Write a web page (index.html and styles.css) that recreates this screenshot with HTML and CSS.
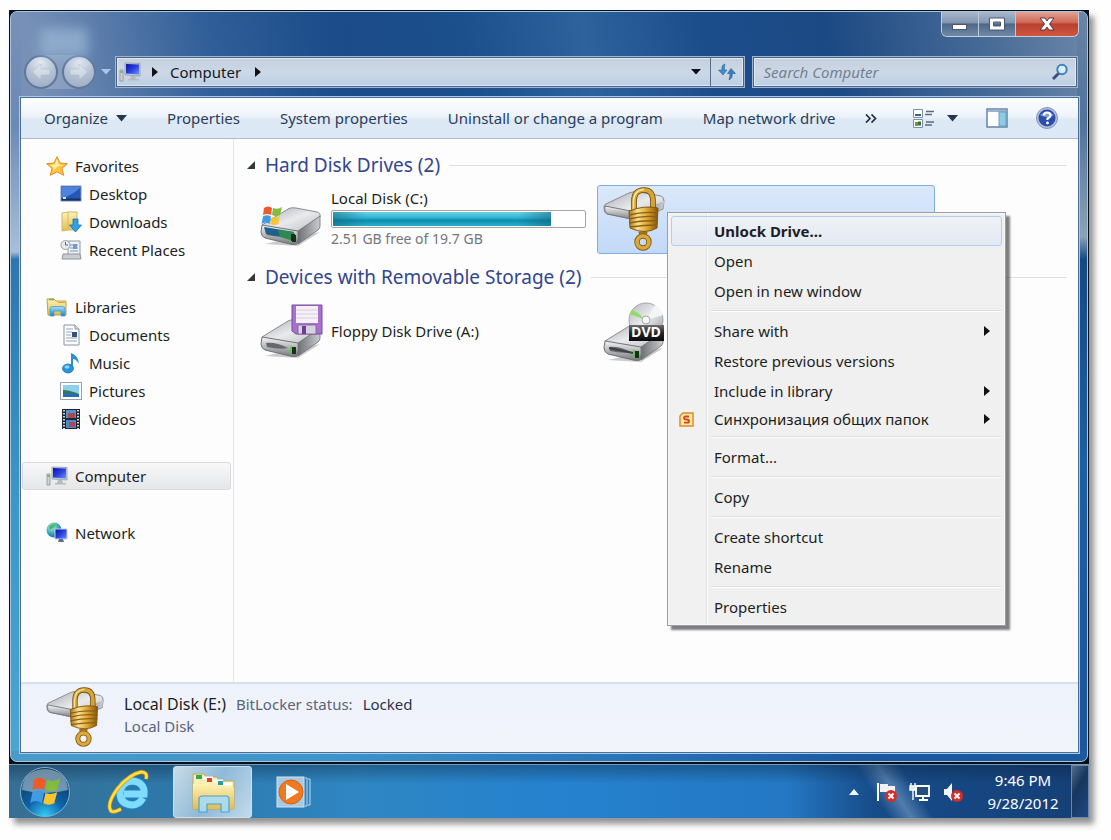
FILE: index.html
```
<!DOCTYPE html>
<html lang="en">
<head>
<meta charset="utf-8">
<title>Computer</title>
<link rel="stylesheet" href="styles.css">
</head>
<body>
<svg class="defs" width="0" height="0" aria-hidden="true">
  <defs>
    <linearGradient id="metalTop" x1="0" y1="0" x2="1" y2="1"><stop offset="0" stop-color="#a9abb0"/><stop offset=".5" stop-color="#e9eaec"/><stop offset="1" stop-color="#b9bbbe"/></linearGradient>
    <linearGradient id="metalFront" x1="0" y1="0" x2="0" y2="1"><stop offset="0" stop-color="#f6f6f7"/><stop offset="1" stop-color="#77797d"/></linearGradient>
    <linearGradient id="metalSide" x1="0" y1="0" x2="1" y2="0"><stop offset="0" stop-color="#6f7175"/><stop offset="1" stop-color="#c9cbce"/></linearGradient>
    <linearGradient id="gold" x1="0" y1="0" x2="1" y2="0"><stop offset="0" stop-color="#a8741a"/><stop offset=".3" stop-color="#fbe28b"/><stop offset=".65" stop-color="#d9a02c"/><stop offset="1" stop-color="#80540d"/></linearGradient>
    <linearGradient id="screen" x1="0" y1="0" x2="1" y2="1"><stop offset="0" stop-color="#0a12a0"/><stop offset=".5" stop-color="#2b3ee0"/><stop offset="1" stop-color="#6f95f2"/></linearGradient>
    <linearGradient id="folder" x1="0" y1="0" x2="0" y2="1"><stop offset="0" stop-color="#fdf3b4"/><stop offset="1" stop-color="#e3bb52"/></linearGradient>
    <linearGradient id="sky" x1="0" y1="0" x2="0" y2="1"><stop offset="0" stop-color="#9fe3fb"/><stop offset="1" stop-color="#1d80c8"/></linearGradient>
    <linearGradient id="disc" x1="0" y1="0" x2="1" y2="1"><stop offset="0" stop-color="#b4b7ba"/><stop offset=".5" stop-color="#eceded"/><stop offset="1" stop-color="#8e9194"/></linearGradient>
    <linearGradient id="label" x1="0" y1="0" x2="0" y2="1"><stop offset="0" stop-color="#6c6e72"/><stop offset=".5" stop-color="#232427"/><stop offset="1" stop-color="#0b0b0d"/></linearGradient>
    <radialGradient id="globe" cx=".35" cy=".3" r=".8"><stop offset="0" stop-color="#b7f0ea"/><stop offset=".6" stop-color="#2b9fb5"/><stop offset="1" stop-color="#126a8e"/></radialGradient>
    <symbol id="i-drive" viewBox="0 0 62 42">
      <path d="M5 39 L38 41 L60 27 L44 30 Z" fill="#0003"/>
      <path d="M2 20 L28 4 Q31 2 36 3 L57 7 Q61 8 60 12 L38 27 L3 22 Z" fill="url(#metalTop)" stroke="#8b8d91"/>
      <path d="M38 26 L60 11 L60 21 Q60 23 58 25 L38 39 Z" fill="url(#metalSide)" stroke="#6d6f72" stroke-width=".8"/>
      <path d="M2 20 L38 26 Q39 33 37 39 Q34 40 30 39 L5 33 Q1 31 1 27 Z" fill="url(#metalFront)" stroke="#707276"/>
      <path d="M6 26 Q16 25 28 31 Q20 33 7 30 Z" fill="#66686c"/>
      <path d="M32 30 h4 v7 h-4 Z" fill="#183018"/><path d="M31 29 v8" stroke="#5ac84a" stroke-width="1.5"/>
    </symbol>
    <symbol id="i-lockdrive" viewBox="0 0 62 66">
      <path d="M1 20 Q1 17 5 16 L26 6 Q30 4 36 5 L58 9 Q61 10 61 14 L60 22 L33 33 L4 27 Q1 26 1 20 Z" fill="url(#metalTop)" stroke="#8a8b90"/>
      <path d="M2 19 L33 25 L33 33 L5 27 Q1 26 2 19 Z" fill="url(#metalFront)" stroke="#777980"/>
      <path d="M33 25 L61 14 L60 21 L33 33 Z" fill="url(#metalSide)"/>
      <path d="M31 27 V14 Q31 3 41 3 Q50 3 50 14 V26" fill="none" stroke="#6e480a" stroke-width="5.600"/>
      <path d="M31 27 V14 Q31 3 41 3 Q50 3 50 14 V26" fill="none" stroke="#d3a437" stroke-width="4"/>
      <path d="M30.500 26 V14 Q31 3 41 2.500" fill="none" stroke="#f9e59b" stroke-width="1.500"/>
      <path d="M26 24 Q41 18 55 21 L54 41 Q42 48 27 41 Z" fill="url(#gold)" stroke="#83560f"/>
      <path d="M26 28 Q41 24 55 26 M26 32 Q41 28 55 30 M26 36 Q41 33 55 34 M27 40 Q41 38 54 38" fill="none" stroke="#8c5f14" stroke-width="1.400"/>
      <path d="M36 45 H44 L43 50 H37 Z" fill="#b78322" stroke="#83560f" stroke-width=".8"/>
      <circle cx="40" cy="55" r="6" fill="none" stroke="#855910" stroke-width="5.400"/>
      <circle cx="40" cy="55" r="6" fill="none" stroke="#dba83a" stroke-width="3.600"/>
    </symbol>
    <symbol id="i-pc" viewBox="0 0 22 20">
      <path d="M1 8 h3 v11 h-3 Z" fill="#d3d6d9" stroke="#8c9096" stroke-width=".8"/><path d="M1.500 10 h2" stroke="#2fc52f" stroke-width="1.600"/>
      <path d="M6 1 L21 1.500 V14 L6 13 Z" fill="#c7cfdc" stroke="#8f99ab" stroke-width=".8"/>
      <path d="M7 2 L20 2.500 V12.500 L7 11.500 Z" fill="url(#screen)"/>
      <path d="M12 14 h4 l1 3 h3 v1.500 h-11 v-1.500 h2 Z" fill="#b4b9c2"/>
    </symbol>
    <symbol id="i-win" viewBox="0 0 24 24">
      <path d="M4 4 Q8 1 12 4 L11 11 Q7 9 3 11 Z" fill="#ee5a28"/>
      <path d="M13 4 Q18 6 22 3 L20 11 Q16 13 12 11 Z" fill="#83bc3b"/>
      <path d="M3 12.500 Q7 10 11 12.500 L9.500 20 Q5 17 1.500 20 Z" fill="#3f9ce0"/>
      <path d="M12 13 Q16 14.500 20 12.500 L18 20 Q14 22 10.500 20 Z" fill="#fcc52c"/>
    </symbol>
    <symbol id="i-library" viewBox="0 0 22 20">
      <path d="M1 2 h7 l2 2 h10 v14 H2 Z" fill="url(#folder)" stroke="#b99a3c" stroke-width=".9"/>
      <path d="M3 2.500 h5" stroke="#6fb350" stroke-width="1.600"/><path d="M12 5.500 h7" stroke="#d9a445"/>
      <path d="M4 19 V12 Q4 9.500 7 9.500 h9 Q19 9.500 19 12 V19 h-4 V14 H8 V19 Z" fill="url(#sky)" stroke="#4a9cc7" stroke-width=".8"/>
    </symbol>
    <symbol id="i-badge" viewBox="0 0 12 12"><circle cx="6" cy="6" r="6" fill="#d92b26"/><path d="M3.500 3.500 L8.500 8.500 M8.500 3.500 L3.500 8.500" stroke="#fff" stroke-width="2"/></symbol>
  </defs>
</svg>

<div class="desktop">
  <main class="window">
    <header class="titlebar">
      <div class="caption">
        <div class="ghost"></div>
        <div class="winbtns">
          <button class="wb" aria-label="Minimize"><svg width="18" height="14" viewBox="0 0 18 14"><rect x="1.500" y="7.500" width="14" height="5" fill="#fff" stroke="#4c5868"/></svg></button>
          <button class="wb" aria-label="Maximize"><svg width="18" height="14" viewBox="0 0 18 14"><path d="M1.500 1 h15 v12 h-15 Z M5.500 5 v4 h7 v-4 Z" fill="#fff" fill-rule="evenodd" stroke="#4c5868"/></svg></button>
          <button class="wb close" aria-label="Close"><svg width="18" height="14" viewBox="0 0 18 14"><path d="M2 1 h5 l2 3 2-3 h5 l-4.500 6 4.500 6 h-5 l-2-3 -2 3 h-5 l4.500-6 Z" fill="#fff" stroke="#5a3540"/></svg></button>
        </div>
      </div>
      <div class="navrow">
        <div class="travel">
          <button class="orb" aria-label="Back"><svg width="22" height="22" viewBox="0 0 22 22"><path d="M2 11 L11 3 V8 H20 V14 H11 V19 Z" fill="#dfe5ee" stroke="#a9b5c6" stroke-width=".7"/></svg></button>
          <button class="orb" aria-label="Forward"><svg width="22" height="22" viewBox="0 0 22 22"><path d="M20 11 L11 3 V8 H2 V14 H11 V19 Z" fill="#dfe5ee" stroke="#a9b5c6" stroke-width=".7"/></svg></button>
        </div>
        <button class="recent" aria-label="Recent pages"><svg width="10" height="6" viewBox="0 0 10 6"><path d="M0 0 H10 L5 5.500 Z" fill="#aac6e6"/></svg></button>
        <div class="address">
          <svg width="22" height="20"><use href="#i-pc"/></svg>
          <svg class="crumb" width="6" height="12" viewBox="0 0 6 12"><path d="M0 1 L6 6 L0 11 Z" fill="#101418"/></svg>
          <a class="place" href="#">Computer</a>
          <svg class="crumb" width="6" height="12" viewBox="0 0 6 12"><path d="M0 1 L6 6 L0 11 Z" fill="#101418"/></svg>
          <button class="drop" aria-label="Previous locations"><svg width="10" height="6" viewBox="0 0 10 6"><path d="M0 0 H10 L5 5.500 Z" fill="#0b0f1e"/></svg></button>
          <button class="refresh" aria-label="Refresh"><svg width="20" height="18" viewBox="0 0 20 18"><path d="M8 1 Q4 2 5 7 H1.500 L6 12 L10 7 H7.500 Q7 4 8 1 Z" fill="#3f8dcb" stroke="#2868a0" stroke-width=".6"/><path d="M12 17 Q16 15 15 10.500 H18.500 L14 5.500 L10.500 10.500 H13 Q13 14 12 17 Z" fill="#3f7fb9" stroke="#245d94" stroke-width=".6"/></svg></button>
        </div>
        <label class="search">
          <input type="text" placeholder="Search Computer" aria-label="Search Computer">
          <svg width="18" height="18" viewBox="0 0 18 18"><path d="M8 10 L2 16" stroke="#3c4f86" stroke-width="3"/><circle cx="11" cy="6.500" r="4.700" fill="#d9f0fb" stroke="#3f83bd" stroke-width="2"/></svg>
        </label>
      </div>
    </header>

    <div class="client">
      <div class="toolbar">
        <button>Organize <svg width="11" height="7" viewBox="0 0 11 7"><path d="M0 0 H11 L5.500 6.500 Z" fill="#26364f"/></svg></button>
        <button>Properties</button>
        <button>System properties</button>
        <button>Uninstall or change a program</button>
        <button>Map network drive</button>
        <button class="more" aria-label="More commands"><svg width="12" height="9" viewBox="0 0 12 9"><path d="M1 .5 L5 4.500 L1 8.500 M6.500 .5 L10.500 4.500 L6.500 8.500" fill="none" stroke="#1f2c44" stroke-width="1.700"/></svg></button>
        <div class="views">
          <button aria-label="Change your view"><svg width="23" height="21" viewBox="0 0 23 21"><path d="M1.500 1.500 h9 v8 h-9 Z M1.500 11.500 h9 v8 h-9 Z" fill="#fff" stroke="#7e8ea6"/><path d="M3 6 h6 v2 h-6 Z" fill="#2f6b74"/><path d="M3 14 h3 v4 h-3 Z" fill="#58a53c"/><path d="M6 13.500 h3 v4 h-3 Z" fill="#3d6d39"/><path d="M14 3.500 h8 M13 6.500 h7 M14 14 h8 M13 17 h7" stroke="#5b6a80" stroke-width="1.400"/></svg></button>
          <button aria-label="More options"><svg width="11" height="7" viewBox="0 0 11 7"><path d="M0 0 H11 L5.500 6.500 Z" fill="#26364f"/></svg></button>
          <button aria-label="Show the preview pane"><svg width="22" height="20" viewBox="0 0 22 20"><rect x="1" y="1" width="20" height="18" fill="#fff" stroke="#5b7da3" stroke-width="1.400"/><path d="M2 3 h18" stroke="#9bb4cf" stroke-width="2"/><rect x="13" y="4" width="7" height="14" fill="#8ccbe8" stroke="#5d93b8" stroke-width=".8"/></svg></button>
          <button aria-label="Get help"><svg width="22" height="22" viewBox="0 0 22 22"><circle cx="11" cy="11" r="10.500" fill="#b3bfd8" stroke="#8796b5"/><circle cx="11" cy="11" r="8.500" fill="#2b4cad"/><path d="M4 8 Q11 2 18 8 Q11 12 4 8 Z" fill="#7fa0e2"/><path d="M8 8.500 Q8 5.500 11 5.500 Q14.500 5.500 14.500 8.500 Q14.500 10 11.500 11.500 V13" fill="none" stroke="#fff" stroke-width="2.200"/><circle cx="11.500" cy="16" r="1.400" fill="#fff"/></svg></button>
        </div>
      </div>

      <div class="body">
        <nav class="tree">
          <section>
            <a href="#"><svg width="22" height="20" viewBox="0 0 22 20"><path d="M11 .7 L14 7 L21.300 7.700 L16 12.300 L17.700 19.300 L11 15.800 L4.300 19.300 L6 12.300 L.7 7.700 L8 7 Z" fill="#fbc540" stroke="#e08a2c"/><path d="M11 3 L13 8.500 L18 9 Q11 9 7 15 L7.500 11.500 L4 9 L8.500 8.500 Z" fill="#fff0a0"/></svg>Favorites</a>
            <a href="#" class="sub"><svg width="22" height="18" viewBox="0 0 22 18"><rect x="1" y="1" width="20" height="15" fill="#2555b5" stroke="#7f93b5"/><path d="M2 13 Q11 11 20 3 V2 H2 Z" fill="#4d83dc"/><path d="M1.500 14.500 h19" stroke="#17305f" stroke-width="2"/><path d="M3 13 h3" stroke="#d8e4ef" stroke-width="2"/></svg>Desktop</a>
            <a href="#" class="sub"><svg width="22" height="22" viewBox="0 0 22 22"><path d="M2 2 L8 1 H17 V19 H8 L2 20 Z" fill="url(#folder)" stroke="#d3b768"/><path d="M8 1 V19" stroke="#d8ba64"/><path d="M13 8 h5 v6 h3.500 l-6 7 -6-7 h3.500 Z" fill="#30a0e8" stroke="#1b6eb0" stroke-width=".8"/></svg>Downloads</a>
            <a href="#" class="sub"><svg width="22" height="22" viewBox="0 0 22 22"><path d="M8 2 h12 v14 h-12 Z" fill="#eef2f6" stroke="#8f989f"/><path d="M10 6 h8 M10 9 h8 M10 12 h8" stroke="#7892b5" stroke-width="1.200"/><path d="M13 5 h4 v5 h-4 Z" fill="#6f9cd0"/><path d="M3 15 h17 l1 5 h-19 Z" fill="#c8cdd2" stroke="#8f969c"/><circle cx="5.500" cy="6" r="4.500" fill="#e6ebef" stroke="#9aa3a9"/><path d="M5.500 3 V6 H8" fill="none" stroke="#666"/></svg>Recent Places</a>
          </section>
          <section>
            <a href="#"><svg width="22" height="20"><use href="#i-library"/></svg>Libraries</a>
            <a href="#" class="sub"><svg width="22" height="22" viewBox="0 0 22 22"><path d="M4 1 h11 l4 4 v16 H4 Z" fill="#fff" stroke="#8b949e"/><path d="M15 1 v4 h4" fill="#d5dbe2" stroke="#8b949e"/><path d="M6 5 h7 M6 8 h6 M6 11 h5 M6 14 h11 M6 17 h11" stroke="#8ba0be"/><path d="M12 8 h5 v5 h-5 Z" fill="#34507f"/></svg>Documents</a>
            <a href="#" class="sub"><svg width="22" height="22" viewBox="0 0 22 22"><path d="M11 1 Q18 3 19 12 Q16 7 13 7 V16 H11 Z" fill="#2f8fd0"/><ellipse cx="8" cy="16.500" rx="5.500" ry="4.500" fill="#2793d8" stroke="#1b70ae" stroke-width=".7"/><ellipse cx="7" cy="15" rx="2.500" ry="1.700" fill="#8fd3f6"/></svg>Music</a>
            <a href="#" class="sub"><svg width="22" height="18" viewBox="0 0 22 18"><rect x=".5" y=".5" width="21" height="17" fill="#fff" stroke="#9aa2aa"/><rect x="3" y="3" width="16" height="12" fill="#8fd0ef"/><path d="M3 8 Q9 8 19 12 V15 H3 Z" fill="#2c7a55"/><path d="M3 12 Q10 10 19 13 V15 H3 Z" fill="#2b6bb5"/></svg>Pictures</a>
            <a href="#" class="sub"><svg width="22" height="22" viewBox="0 0 22 22"><path d="M2 1 h18 v20 h-18 Z" fill="#1d2633"/><path d="M6 2 h10 v8 h-10 Z" fill="#5a93c8"/><path d="M6 12 h10 v8 h-10 Z" fill="#4f88c2"/><path d="M8 5 h7 v5 h-7 Z M9 14 h6 v5 h-6 Z" fill="#a34b5a"/><path d="M4 2 V21 M18 2 V21" stroke="#dfe6ee" stroke-width="1.800" stroke-dasharray="1.500 1.500"/></svg>Videos</a>
          </section>
          <section>
            <a href="#" class="current"><svg width="22" height="20"><use href="#i-pc"/></svg>Computer</a>
          </section>
          <section>
            <a href="#"><svg width="22" height="22" viewBox="0 0 22 22"><circle cx="8" cy="8" r="7.500" fill="url(#globe)"/><path d="M3 4 Q7 1 10 3 Q8 6 4 8 Z" fill="#4fb858"/><path d="M9 7 h12 v10 h-12 Z" fill="url(#screen)" stroke="#c3cbe0"/><path d="M13 17 h4 l1 3 h-6 Z" fill="#5d6d90"/></svg>Network</a>
          </section>
        </nav>

        <div class="files">
          <h2><svg width="10" height="10" viewBox="0 0 10 10"><path d="M9 1 V9 H1 Z" fill="#33363c"/></svg><span>Hard Disk Drives (2)</span></h2>
          <div class="grid">
            <div class="tile">
              <svg class="pic" width="62" height="66" viewBox="0 0 62 66"><use href="#i-drive" y="18" width="62" height="42"/><path d="M4 40 L34 45 V52 L6 47 Z" fill="#1d5f8d"/><path d="M18 43 L34 45 V54 L20 50 Z" fill="#2f8a51"/><path d="M31 47 h4 v7 h-4 Z" fill="#12301c"/><use href="#i-win" y="17" width="24" height="24"/></svg>
              <div class="info">
                <span class="name">Local Disk (C:)</span>
                <div class="meter"><div class="used" style="width:87%"></div></div>
                <span class="meta">2.51 GB free of 19.7 GB</span>
              </div>
            </div>
            <div class="tile selected">
              <svg class="pic" width="62" height="66"><use href="#i-lockdrive"/></svg>
              <div class="menu" role="menu">
                <button class="hot" role="menuitem"><span>Unlock Drive...</span></button>
                <button role="menuitem"><span>Open</span></button>
                <button role="menuitem"><span>Open in new window</span></button>
                <hr>
                <button role="menuitem"><span>Share with</span><svg class="arrow" width="6" height="10" viewBox="0 0 6 10"><path d="M0 0 L6 5 L0 10 Z" fill="#111"/></svg></button>
                <button role="menuitem"><span>Restore previous versions</span></button>
                <button role="menuitem"><span>Include in library</span><svg class="arrow" width="6" height="10" viewBox="0 0 6 10"><path d="M0 0 L6 5 L0 10 Z" fill="#111"/></svg></button>
                <button class="sync" role="menuitem"><svg class="ico" width="15" height="15" viewBox="0 0 15 15"><path d="M4 1 h10 v13 h-13 V4 Z" fill="#fbe7b0" stroke="#e08c1e" stroke-width="1.500"/><path d="M10 4.500 H6.500 Q5 4.500 5 6 Q5 7.300 7.500 7.500 Q10 7.700 10 9 Q10 10.700 8.500 10.700 H5" fill="none" stroke="#d0471b" stroke-width="1.800"/></svg><span>Синхронизация общих папок</span><svg class="arrow" width="6" height="10" viewBox="0 0 6 10"><path d="M0 0 L6 5 L0 10 Z" fill="#111"/></svg></button>
                <hr>
                <button role="menuitem"><span>Format...</span></button>
                <hr>
                <button role="menuitem"><span>Copy</span></button>
                <hr>
                <button role="menuitem"><span>Create shortcut</span></button>
                <button role="menuitem"><span>Rename</span></button>
                <hr>
                <button role="menuitem"><span>Properties</span></button>
              </div>
            </div>
          </div>
          <h2><svg width="10" height="10" viewBox="0 0 10 10"><path d="M9 1 V9 H1 Z" fill="#33363c"/></svg><span>Devices with Removable Storage (2)</span></h2>
          <div class="grid">
            <div class="tile">
              <svg class="pic" width="62" height="66" viewBox="0 0 62 66"><use href="#i-drive" y="18" width="62" height="42"/><path d="M32 6 h30 v29 h-26 l-4-3 Z" fill="#a672cb" stroke="#7b4ba2"/><path d="M36 7 h22 v17 h-22 Z" fill="#f4f2f8"/><path d="M36 11 h22 M36 15 h22 M36 19 h22" stroke="#d2cede"/><path d="M38 26 h18 v9 h-18 Z" fill="#d6d2df" stroke="#7c5c98" stroke-width=".8"/><path d="M42 27 h4 v8 h-4 Z" fill="#6b3f91"/></svg>
              <div class="info"><span class="name">Floppy Disk Drive (A:)</span></div>
            </div>
            <div class="tile">
              <svg class="pic" width="62" height="66" viewBox="0 0 62 66"><use href="#i-drive" y="22" width="62" height="42"/><path d="M6 49 L30 54" stroke="#3d3f42" stroke-width="2"/><circle cx="43" cy="21" r="17" fill="url(#disc)" stroke="#a5a8aa"/><path d="M43 21 L27 15 L29 11 L35 14 Z" fill="#8fdd60"/><path d="M43 21 L52 6 Q58 9 60 16 Z" fill="#f4f5f6"/><circle cx="43" cy="21" r="4" fill="#f8f8f8" stroke="#a5a8aa"/><path d="M26 26 h35 v16 h-35 Z" fill="url(#label)"/><text class="dvd" x="43" y="38" text-anchor="middle">DVD</text></svg>
            </div>
          </div>
        </div>
      </div>

      <footer class="details">
        <svg width="60" height="62"><use href="#i-lockdrive"/></svg>
        <div>
          <div class="dline"><span class="dname">Local Disk (E:)</span><span class="dlabel">BitLocker status:</span><span class="dval">Locked</span></div>
          <div class="dlabel">Local Disk</div>
        </div>
      </footer>
    </div>
  </main>

  <div class="taskbar">
    <button class="start" aria-label="Start"><svg width="52" height="52" viewBox="0 0 52 52"><defs><radialGradient id="orb" cx=".5" cy="1" r="1"><stop offset="0" stop-color="#35d0f8"/><stop offset=".4" stop-color="#0d62a8"/><stop offset="1" stop-color="#0f3350"/></radialGradient></defs><circle cx="26" cy="26" r="24.500" fill="url(#orb)" stroke="#7db6d6"/><path d="M3 24 Q4 4 26 3 Q48 4 49 24 Q26 30 3 24 Z" fill="#cfe1ec" opacity=".5"/><use href="#i-win" x="9" y="8" width="35" height="35"/></svg></button>
    <button class="ie" aria-label="Internet Explorer"><svg width="44" height="44" viewBox="0 0 44 44"><path d="M36 28 Q32 35 25 35 Q13 34 13 23 Q14 12 25 11 Q38 12 37 24 H17" fill="none" stroke="#1b86c8" stroke-width="9"/><path d="M36 28 Q32 35 25 35 Q13 34 13 23 Q14 12 25 11 Q38 12 37 24 H17" fill="none" stroke="#7fdcfb" stroke-width="7"/><path d="M39 9 Q41 2 34 2 Q23 4 11 18 Q-1 34 4 41 Q7 43 14 39" fill="none" stroke="#d59a17" stroke-width="4"/><path d="M39 9 Q41 2 34 2 Q23 4 11 18 Q-1 34 4 41 Q7 43 14 39" fill="none" stroke="#ffe043" stroke-width="2.600"/></svg></button>
    <button class="explorer" aria-label="Windows Explorer"><svg width="44" height="42" viewBox="0 0 44 42"><path d="M2 3 h11 l2 3 h11 l2 4 h15 v28 H2 Z" fill="#f9efb4" stroke="#c4a552"/><path d="M12 7 h10 M22 10 h10 M32 13 h9" stroke="#fff" stroke-width="3"/><path d="M5 4 h6 v4 h-6 Z" fill="#34a853"/><path d="M16 7 h5 v4 h-5 Z" fill="#d8442e"/><path d="M27 10 h5 v4 h-5 Z" fill="#2a9d9a"/><path d="M2 13 h18 l3 4 h20 v21 H2 Z" fill="url(#folder)"/><path d="M8 41 V28 Q8 25 12 25 h23 Q38 25 38 28 V41 h-8 V33 H16 V41 Z" fill="#a5dcf5" fill-opacity=".9" stroke="#4ba1d0" stroke-width="1.200"/></svg></button>
    <button class="player" aria-label="Windows Media Player"><svg width="36" height="34" viewBox="0 0 36 34"><path d="M29 3 h2 v28 h-2 M32 4 h2 v26 h-2" fill="none" stroke="#bcdcf0"/><rect x="1" y="2" width="27" height="30" fill="#a9c9e0" stroke="#cfe3f1"/><circle cx="15" cy="17" r="12" fill="#f07a22" stroke="#d7601a"/><path d="M10 9 L23 17 L10 25 Z" fill="#fff"/></svg></button>
    <div class="tray">
      <button aria-label="Show hidden icons"><svg width="10" height="6" viewBox="0 0 10 6"><path d="M0 6 L5 0 L10 6 Z" fill="#f4f8fc"/></svg></button>
      <button aria-label="Action Center"><svg width="22" height="20" viewBox="0 0 22 20"><path d="M2 1 V19" stroke="#fff" stroke-width="2"/><path d="M4 2 h8 v2 h7 v8 h-8 v-2 h-7 Z" fill="#f0f3f6"/><use href="#i-badge" x="9" y="8" width="12" height="12"/></svg></button>
      <button aria-label="Network"><svg width="22" height="20" viewBox="0 0 22 20"><path d="M7 4 h13 v10 h-13 Z" fill="#234e7c" stroke="#fff" stroke-width="1.800"/><path d="M10 18 h9 M14 14 v4" stroke="#fff" stroke-width="2"/><path d="M1 4 h6 v4 h-6 Z M2 1 v3 M6 1 v3 M4 8 v10" fill="#dfe6ee" stroke="#fff" stroke-width="1.400"/></svg></button>
      <button aria-label="Volume"><svg width="22" height="20" viewBox="0 0 22 20"><path d="M2 7 h3 l5-6 v18 l-5-6 h-3 Z" fill="#f2f5f8"/><use href="#i-badge" x="9" y="8" width="12" height="12"/></svg></button>
      <div class="clock"><div>9:46 PM</div><div>9/28/2012</div></div>
    </div>
    <button class="peek" aria-label="Show desktop"></button>
  </div>
</div>
</body>
</html>
```
FILE: styles.css
```
* { box-sizing: border-box; }

body {
  margin: 0;
  padding: 10px 22px 22px 9px;
  min-height: 100vh;
  display: flex;
  background: #fefefe;
  font-family: "Noto Sans", "Open Sans", sans-serif;
  font-size: 15px;
  line-height: 20px;
  color: #1e1e22;
}

button {
  margin: 0;
  padding: 0;
  border: 0;
  background: none;
  font: inherit;
  color: inherit;
  display: flex;
  align-items: center;
  justify-content: center;
  white-space: nowrap;
}

a { color: inherit; text-decoration: none; }
svg { display: block; flex: none; }
.defs { position: absolute; }

.desktop {
  flex: 1;
  min-width: 0;
  display: flex;
  flex-direction: column;
  background: #06101c;
  box-shadow: 5px 6px 6px #0000006b;
}

.window {
  flex: 1;
  display: flex;
  flex-direction: column;
  margin: 1px 1px 2px;
  padding: 0 8px 8px 9px;
  border: 1px solid #a9c4de;
  border-radius: 7px;
  background:
    linear-gradient(90deg, #4a9bc9, #3d94ca 30%, #2b76b8 55%, #1a58a0 80%, #1b5a9e) bottom / 100% 10px no-repeat,
    linear-gradient(#8094b800, #6a8ab6 15%, #a9bfd9 32%, #2d77ae 33%, #3b97c8 65%, #4ba6d3) left / 10px 100% no-repeat,
    linear-gradient(#6c86a800, #50739c 15%, #8ba2b9 30%, #134a86 33%, #1d5f9f 60%, #1c559b) right / 10px 100% no-repeat,
    linear-gradient(80deg, #7f94b8 0, #7890b6 12%, #2f5e98 27%, #1b4b88 38%, #1c4f8d 48%, #2d629c 58%, #1c4d8b 68%, #1b4983 78%, #4a6d98 92%, #6c87a8);
}

.titlebar { display: flex; flex-direction: column; }
.caption { display: flex; justify-content: space-between; height: 45px; }
.ghost {
  width: 48px;
  margin: 16px 0 0 20px;
  background: #9bb9d6;
  opacity: .7;
  filter: blur(6px);
}

.winbtns {
  display: flex;
  height: 25px;
  border: 1px solid #c0cedd;
  border-top: 0;
  border-radius: 0 0 6px 6px;
  overflow: hidden;
}
.wb {
  width: 37px;
  background: linear-gradient(#a9b8ca, #8296b0 45%, #4c678a 50%, #7189a6);
  border-right: 1px solid #bccad9;
}
.wb.close {
  width: 62px;
  border-right: 0;
  background: linear-gradient(#e2a294, #cf6653 45%, #b8402f 50%, #d2573f);
}

.navrow { display: flex; align-items: center; height: 30px; margin-bottom: 10px; padding: 0 2px 0 4px; }
.travel {
  display: flex;
  gap: 4px;
  border-radius: 17px;
  background: #ffffff30;
}
.orb {
  width: 34px;
  height: 34px;
  border-radius: 50%;
  border: 2px solid #60779c;
  background: radial-gradient(circle at 50% 15%, #e9eef5, #b4c1d3 50%, #98a9c1);
}
.orb svg { opacity: .6; }
.recent { width: 20px; }

.address, .search {
  display: flex;
  align-items: center;
  height: 30px;
  border: 1px solid #4b6285;
  outline: 1px solid #9db5d2;
  background: linear-gradient(#c5d0de, #ccd8e5 50%, #bdcfe6);
  box-shadow: inset 0 0 0 1px #dfe8f1;
}
.address { flex: 592 1 0; min-width: 0; padding-left: 2px; }
.crumb { margin: 0 12px 0 11px; }
.place { color: #17191e; }
.place + .crumb { margin-left: 14px; }
.drop { margin-left: auto; width: 27px; height: 28px; }
.refresh { width: 33px; height: 28px; border-left: 1px solid #5b708f; }
.search { flex: 290 1 0; min-width: 0; margin-left: 9px; padding: 0 7px 0 10px; }
.search input {
  flex: 1;
  min-width: 0;
  padding: 0;
  border: 0;
  outline: 0;
  background: none;
  font: italic 15px/20px "Noto Sans", "Open Sans", sans-serif;
  color: #222;
}
.search input::placeholder { color: #74808f; opacity: 1; }

.client {
  flex: 1;
  display: flex;
  flex-direction: column;
  border: 1px solid #4b6f98;
  outline: 1px solid #a6cbe4;
  background: #fdfdfe;
}

.toolbar {
  display: flex;
  align-items: center;
  height: 41px;
  padding: 0 20px 0 3px;
  border-bottom: 1px solid #a9bbcf;
  background: linear-gradient(#fdfeff, #eef4fb 45%, #dde8f5 55%, #dde9f6);
  color: #2a3d5c;
}
.toolbar > button { padding: 0 20px; gap: 8px; }
.toolbar > .more { padding: 0 10px; }
.views { display: flex; margin-left: auto; align-items: center; }
.views button { margin-left: 12px; }
.views button:nth-child(n+3) { margin-left: 28px; }

.body { flex: 1; display: flex; }

.tree {
  width: 213px;
  flex: none;
  padding: 13px 0 0 1px;
  border-right: 1px solid #dfe6f1;
  display: flex;
  flex-direction: column;
  gap: 29px;
}
.tree a {
  display: flex;
  align-items: center;
  gap: 7px;
  height: 28px;
  padding-left: 24px;
}
.tree .sub { padding-left: 38px; gap: 7px; }
.tree .current {
  margin-right: 2px;
  padding-left: 23px;
  border: 1px solid #dadadd;
  border-radius: 3px;
  background: linear-gradient(#f8f8f9, #e5e6e8);
}

.files { flex: 1; min-width: 0; padding: 12px 11px 0 12px; }
.files h2 {
  display: flex;
  align-items: center;
  gap: 9px;
  margin: 0;
  height: 28px;
  font-size: 19px;
  line-height: 28px;
  font-weight: 400;
  color: #33458c;
}
.files h2::after { content: ""; flex: 1; height: 1px; background: #dcdfe6; }

.grid {
  display: grid;
  grid-template-columns: repeat(2, 338px);
  gap: 5px;
  padding: 6px 0 9px 8px;
}
.tile {
  position: relative;
  display: flex;
  align-items: center;
  gap: 9px;
  height: 69px;
  padding: 0 5px;
  border: 1px solid transparent;
  border-radius: 3px;
}
.tile.selected {
  border-color: #84acdd;
  background: linear-gradient(#dbe8fb, #c1d9f8);
}
.pic { overflow: visible; }
.info { display: flex; flex-direction: column; padding-bottom: 2px; }
.meter {
  width: 255px;
  height: 18px;
  margin: 2px 0 1px;
  padding: 1px;
  border: 1px solid #a2a4a8;
  border-radius: 2px;
  background: #fff;
}
.used {
  height: 100%;
  background:
    linear-gradient(90deg, #0f5c7780, transparent 15%, transparent 85%, #0f5c7780),
    linear-gradient(#6fd0e6, #2fb5d3 40%, #128bab 60%, #27b0cf);
}
.meta { color: #73757a; font-size: 14px; }
.dvd { font: bold 14px "Open Sans", sans-serif; fill: #fff; }

.menu {
  position: absolute;
  z-index: 2;
  top: 26px;
  left: 69px;
  width: 339px;
  padding: 3px;
  border: 1px solid #9a9da3;
  background: linear-gradient(90deg, #f1f1f1 38px, #dfe0e2 38px, #dfe0e2 39px, #fff 39px, #fff 40px, #f0f0f0 40px);
  box-shadow: inset 0 0 0 1px #f6f6f6, 4px 4px 2px #00000080;
}
.menu button {
  position: relative;
  width: 100%;
  height: 30px;
  padding: 0 12px 0 43px;
  justify-content: flex-start;
}
.menu .sync { height: 26px; padding-left: 8px; }
.menu .ico { margin-right: 20px; }
.menu .arrow { margin-left: auto; }
.menu .hot {
  font-weight: 700;
  border: 1px solid #b3cfee;
  border-radius: 3px;
  padding-left: 42px;
  background: linear-gradient(#edf2f980, #dfe9f7c0);
}
.menu hr {
  height: 2px;
  margin: 4px 1px 4px 40px;
  border: 0;
  border-top: 1px solid #dcdde0;
  background: #fff;
}

.details {
  display: flex;
  align-items: flex-start;
  gap: 19px;
  height: 70px;
  padding: 3px 24px 0;
  border-top: 2px solid #d6dfea;
  background: linear-gradient(#eef2fb, #f2f4fc);
}
.details > div { padding-top: 4px; }
.dline { display: flex; align-items: center; gap: 10px; height: 25px; }
.dname { font-size: 16px; }
.dlabel { color: #5b6478; }
.dval { color: #2a344c; }

.taskbar {
  display: flex;
  align-items: center;
  height: 54px;
  border-top: 1px solid #7d9bb8;
  background:
    linear-gradient(#0a203860, transparent 35%),
    linear-gradient(57deg, transparent 79%, #a9c8e466 81%, transparent 83%),
    linear-gradient(90deg, #376f93, #2d78aa 15%, #2f86c2 32%, #2582cf 50%, #2478c4 72%, #174c8a 80%, #153f76);
}
.start { width: 72px; }
.ie { width: 92px; padding-left: 4px; }
.explorer {
  width: 79px;
  height: 52px;
  border: 1px solid #cfe0ec;
  border-radius: 3px;
  background: linear-gradient(120deg, #c9dbe6, #8db9d8 50%, #c3dbea);
}
.player { width: 84px; }
.tray { display: flex; align-items: center; gap: 11px; margin-left: auto; }
.tray > button:first-child { margin-right: 6px; }
.clock { width: 96px; line-height: 23px; text-align: center; color: #fff; }
.peek {
  align-self: stretch;
  width: 18px;
  border: 1px solid #6b89aa;
  background: linear-gradient(120deg, #526c8a, #17365c 40%, #1d4a83);
}
```
